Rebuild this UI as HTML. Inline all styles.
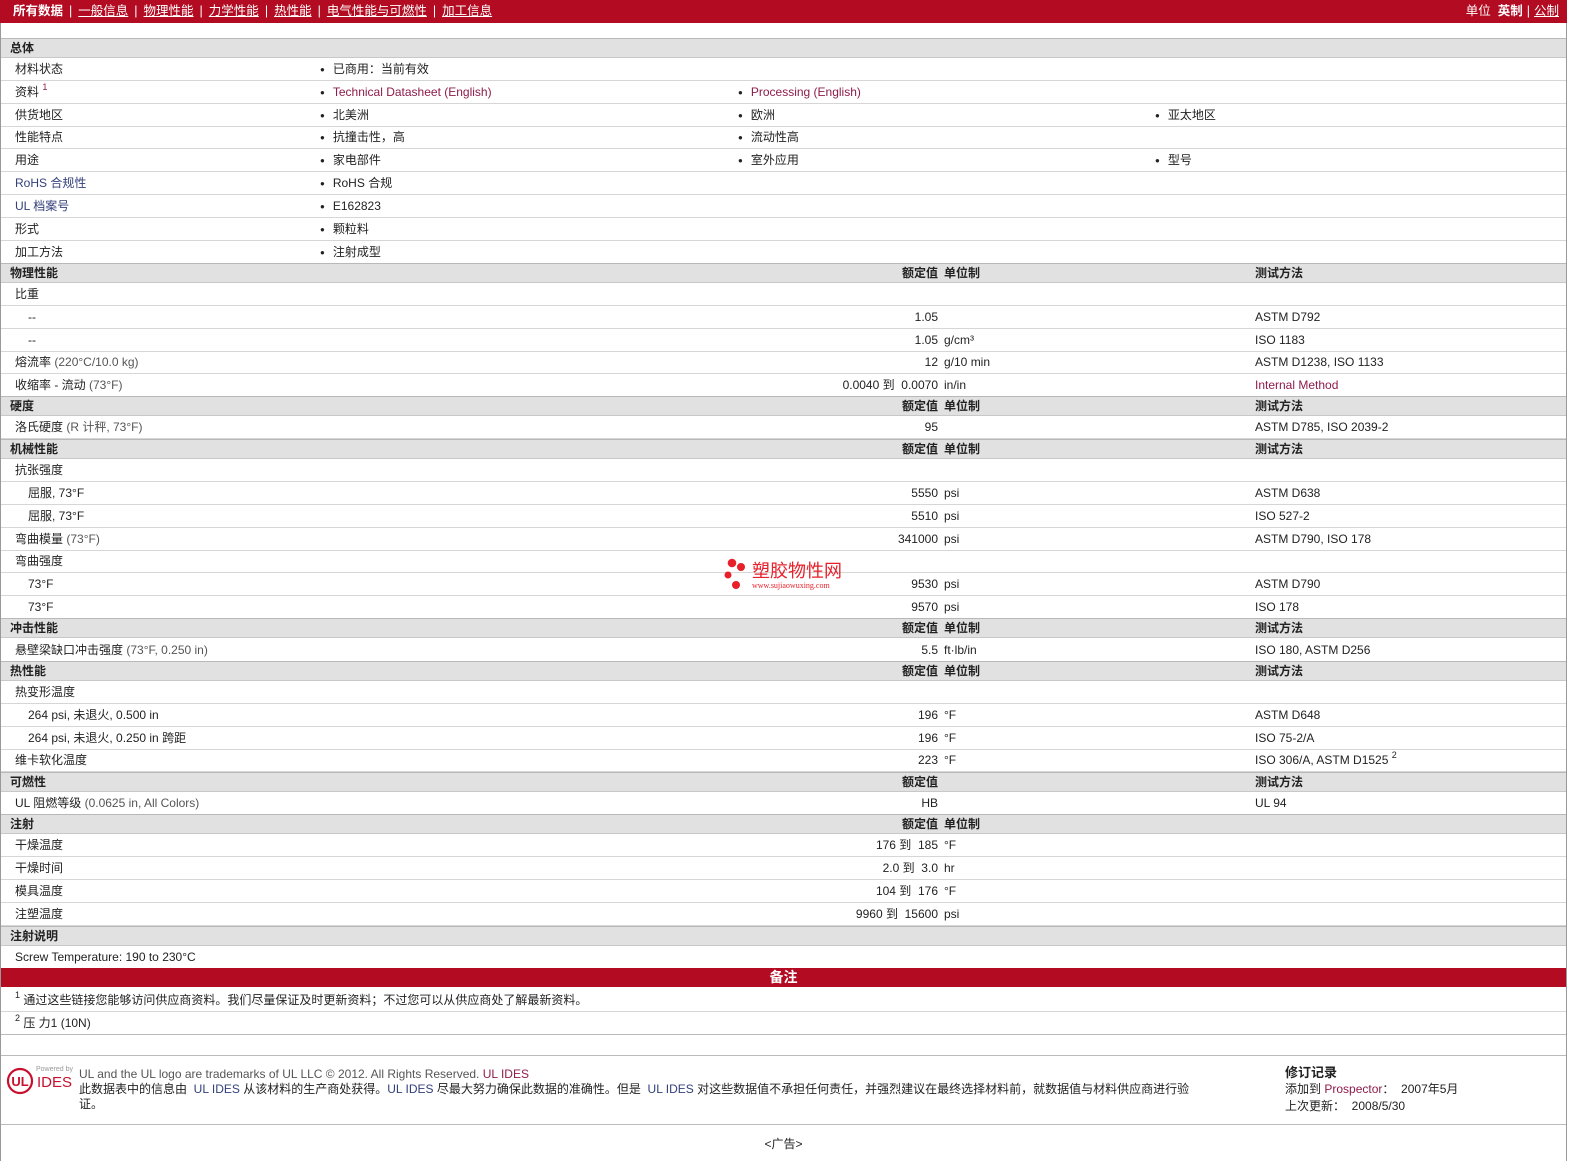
<!DOCTYPE html>
<html><head><meta charset="utf-8">
<style>
*{margin:0;padding:0;box-sizing:border-box}
body{width:1583px;height:1161px;background:#fff;font-family:"Liberation Sans","Noto Sans CJK SC",sans-serif;font-size:12px;color:#222;position:relative;overflow:hidden}
.frame{position:absolute;left:0;top:0;width:1567px;height:1161px;border-left:1px solid #999;border-right:1px solid #999}
.top{position:absolute;left:0;top:0;width:1567px;height:23px;background:#b20b22;color:#fff;line-height:23px;font-size:12.5px}
.top a{color:#fff;text-decoration:underline}
.top .sep{margin:0 6px}
.r{position:absolute;left:1px;width:1565px;height:23px;line-height:23px;border-bottom:1px solid #d6d6d6;white-space:nowrap}
.h{position:absolute;left:1px;width:1565px;height:20px;line-height:19px;background:#e1e1e1;border-top:1px solid #b8b8b8;border-bottom:1px solid #c8c8c8;font-weight:bold;white-space:nowrap}
.r>span,.h>span{position:absolute;top:0}
.l{left:14px}.s{left:27px}.h .t{left:9px}
.v{right:628px;text-align:right}
.u{left:943px}.m{left:1254px}
.hv{right:628px}
.b1{left:319px}.b2{left:737px}.b3{left:1154px}
.dot{font-size:8px;margin-right:8px;position:relative;top:-1px}
.lk{color:#8e1b4b}
.bl{color:#33407a}
.g{color:#555}
sup{font-size:9px;vertical-align:top;position:relative;top:-5px}
</style></head><body>
<div class="frame"></div>
<div class="top">
<span style="position:absolute;left:13px"><b>所有数据</b><span class="sep">|</span><a>一般信息</a><span class="sep">|</span><a>物理性能</a><span class="sep">|</span><a>力学性能</a><span class="sep">|</span><a>热性能</a><span class="sep">|</span><a>电气性能与可燃性</a><span class="sep">|</span><a>加工信息</a></span>
<span style="position:absolute;right:8px">单位 &nbsp;<b>英制</b><span class="sep" style="margin:0 4px">|</span><a>公制</a></span>
</div>

<div class="h" style="top:38px"><span class="t">总体</span></div>
<div class="r" style="top:58px"><span class="l">材料状态</span><span class="b1"><span class="dot">●</span>已商用：当前有效</span></div>
<div class="r" style="top:81px"><span class="l">资料 <sup class="lk">1</sup></span><span class="b1"><span class="dot">●</span><span class="lk">Technical Datasheet (English)</span></span><span class="b2"><span class="dot">●</span><span class="lk">Processing (English)</span></span></div>
<div class="r" style="top:104px"><span class="l">供货地区</span><span class="b1"><span class="dot">●</span>北美洲</span><span class="b2"><span class="dot">●</span>欧洲</span><span class="b3"><span class="dot">●</span>亚太地区</span></div>
<div class="r" style="top:126px"><span class="l">性能特点</span><span class="b1"><span class="dot">●</span>抗撞击性，高</span><span class="b2"><span class="dot">●</span>流动性高</span></div>
<div class="r" style="top:149px"><span class="l">用途</span><span class="b1"><span class="dot">●</span>家电部件</span><span class="b2"><span class="dot">●</span>室外应用</span><span class="b3"><span class="dot">●</span>型号</span></div>
<div class="r" style="top:172px"><span class="l bl">RoHS 合规性</span><span class="b1"><span class="dot">●</span>RoHS 合规</span></div>
<div class="r" style="top:195px"><span class="l bl">UL 档案号</span><span class="b1"><span class="dot">●</span>E162823</span></div>
<div class="r" style="top:218px"><span class="l">形式</span><span class="b1"><span class="dot">●</span>颗粒料</span></div>
<div class="r" style="top:241px"><span class="l">加工方法</span><span class="b1"><span class="dot">●</span>注射成型</span></div>

<div class="h" style="top:263px"><span class="t">物理性能</span><span class="hv">额定值</span><span class="u">单位制</span><span class="m">测试方法</span></div>
<div class="r" style="top:283px"><span class="l">比重</span></div>
<div class="r" style="top:306px"><span class="s">--</span><span class="v">1.05</span><span class="m">ASTM D792</span></div>
<div class="r" style="top:329px"><span class="s">--</span><span class="v">1.05</span><span class="u">g/cm³</span><span class="m">ISO 1183</span></div>
<div class="r" style="top:351px"><span class="l">熔流率 <span class="g">(220°C/10.0 kg)</span></span><span class="v">12</span><span class="u">g/10 min</span><span class="m">ASTM D1238, ISO 1133</span></div>
<div class="r" style="top:374px"><span class="l">收缩率 - 流动 <span class="g">(73°F)</span></span><span class="v">0.0040 到 &nbsp;0.0070</span><span class="u">in/in</span><span class="m lk">Internal Method</span></div>

<div class="h" style="top:396px"><span class="t">硬度</span><span class="hv">额定值</span><span class="u">单位制</span><span class="m">测试方法</span></div>
<div class="r" style="top:416px"><span class="l">洛氏硬度 <span class="g">(R 计秤, 73°F)</span></span><span class="v">95</span><span class="m">ASTM D785, ISO 2039-2</span></div>

<div class="h" style="top:439px"><span class="t">机械性能</span><span class="hv">额定值</span><span class="u">单位制</span><span class="m">测试方法</span></div>
<div class="r" style="top:459px"><span class="l">抗张强度</span></div>
<div class="r" style="top:482px"><span class="s">屈服, 73°F</span><span class="v">5550</span><span class="u">psi</span><span class="m">ASTM D638</span></div>
<div class="r" style="top:505px"><span class="s">屈服, 73°F</span><span class="v">5510</span><span class="u">psi</span><span class="m">ISO 527-2</span></div>
<div class="r" style="top:528px"><span class="l">弯曲模量 <span class="g">(73°F)</span></span><span class="v">341000</span><span class="u">psi</span><span class="m">ASTM D790, ISO 178</span></div>
<div class="r" style="top:550px"><span class="l">弯曲强度</span></div>
<div class="r" style="top:573px"><span class="s">73°F</span><span class="v">9530</span><span class="u">psi</span><span class="m">ASTM D790</span></div>
<div class="r" style="top:596px"><span class="s">73°F</span><span class="v">9570</span><span class="u">psi</span><span class="m">ISO 178</span></div>

<div class="h" style="top:618px"><span class="t">冲击性能</span><span class="hv">额定值</span><span class="u">单位制</span><span class="m">测试方法</span></div>
<div class="r" style="top:639px"><span class="l">悬壁梁缺口冲击强度 <span class="g">(73°F, 0.250 in)</span></span><span class="v">5.5</span><span class="u">ft·lb/in</span><span class="m">ISO 180, ASTM D256</span></div>

<div class="h" style="top:661px"><span class="t">热性能</span><span class="hv">额定值</span><span class="u">单位制</span><span class="m">测试方法</span></div>
<div class="r" style="top:681px"><span class="l">热变形温度</span></div>
<div class="r" style="top:704px"><span class="s">264 psi, 未退火, 0.500 in</span><span class="v">196</span><span class="u">°F</span><span class="m">ASTM D648</span></div>
<div class="r" style="top:727px"><span class="s">264 psi, 未退火, 0.250 in 跨距</span><span class="v">196</span><span class="u">°F</span><span class="m">ISO 75-2/A</span></div>
<div class="r" style="top:749px"><span class="l">维卡软化温度</span><span class="v">223</span><span class="u">°F</span><span class="m">ISO 306/A, ASTM D1525 <sup>2</sup></span></div>

<div class="h" style="top:772px"><span class="t">可燃性</span><span class="hv">额定值</span><span class="m">测试方法</span></div>
<div class="r" style="top:792px"><span class="l">UL 阻燃等级 <span class="g">(0.0625 in, All Colors)</span></span><span class="v">HB</span><span class="m">UL 94</span></div>

<div class="h" style="top:814px"><span class="t">注射</span><span class="hv">额定值</span><span class="u">单位制</span></div>
<div class="r" style="top:834px"><span class="l">干燥温度</span><span class="v">176 到 &nbsp;185</span><span class="u">°F</span></div>
<div class="r" style="top:857px"><span class="l">干燥时间</span><span class="v">2.0 到 &nbsp;3.0</span><span class="u">hr</span></div>
<div class="r" style="top:880px"><span class="l">模具温度</span><span class="v">104 到 &nbsp;176</span><span class="u">°F</span></div>
<div class="r" style="top:903px"><span class="l">注塑温度</span><span class="v">9960 到 &nbsp;15600</span><span class="u">psi</span></div>

<div class="h" style="top:926px"><span class="t">注射说明</span></div>
<div class="r" style="top:946px;border-bottom:none"><span class="l">Screw Temperature: 190 to 230°C</span></div>

<div style="position:absolute;left:1px;top:968px;width:1565px;height:19px;background:#b20b22;color:#fff;text-align:center;font-weight:bold;font-size:14px;line-height:19px">备注</div>
<div class="r" style="top:989px"><span class="l"><sup>1</sup> 通过这些链接您能够访问供应商资料。我们尽量保证及时更新资料；不过您可以从供应商处了解最新资料。</span></div>
<div class="r" style="top:1012px;border-bottom:1px solid #bbb"><span class="l"><sup>2</sup> 压 力1 (10N)</span></div>

<div style="position:absolute;left:1px;top:1055px;width:1565px;height:70px;border-top:1px solid #bbb;border-bottom:1px solid #bbb"></div>
<svg style="position:absolute;left:6px;top:1067px" width="28" height="28" viewBox="0 0 28 28"><circle cx="14" cy="14" r="12" fill="none" stroke="#c8102e" stroke-width="2.2"/><text x="14" y="19" text-anchor="middle" font-family="Liberation Sans" font-weight="bold" font-size="13" fill="#c8102e">UL</text></svg>
<div style="position:absolute;left:36px;top:1066px;font-size:7px;color:#999">Powered by</div>
<div style="position:absolute;left:37px;top:1074px;font-size:15px;color:#c8102e">IDES</div>
<div style="position:absolute;left:79px;top:1067px;line-height:15px;font-size:12px;width:1200px">
<div class="g">UL and the UL logo are trademarks of UL LLC © 2012. All Rights Reserved. <span class="lk">UL IDES</span></div>
<div>此数据表中的信息由 &nbsp;<span class="bl">UL IDES</span> 从该材料的生产商处获得。<span class="bl">UL IDES</span> 尽最大努力确保此数据的准确性。但是 &nbsp;<span class="bl">UL IDES</span> 对这些数据值不承担任何责任，并强烈建议在最终选择材料前，就数据值与材料供应商进行验<br>证。</div>
</div>
<div style="position:absolute;left:1285px;top:1064px;line-height:17px;font-size:12px">
<div style="font-weight:bold;font-size:13px">修订记录</div>
<div>添加到 <span class="lk">Prospector</span>： &nbsp;2007年5月</div>
<div>上次更新： &nbsp;2008/5/30</div>
</div>
<div style="position:absolute;left:0;width:1567px;top:1135px;text-align:center;font-size:12px">&lt;广告&gt;</div>

<svg style="position:absolute;left:722px;top:557px" width="24" height="34" viewBox="0 0 24 34"><circle cx="10" cy="6" r="4.3" fill="#e8202a"/><circle cx="19" cy="10" r="4" fill="#e8202a"/><circle cx="6" cy="18" r="3.5" fill="#e8202a"/><circle cx="14" cy="28" r="4" fill="#e8202a"/></svg>
<div style="position:absolute;left:752px;top:561px;font-size:18px;color:#e8202a;line-height:20px">塑胶物性网</div>
<div style="position:absolute;left:752px;top:581px;font-size:8px;color:#e8202a;font-family:'Liberation Serif',serif">www.sujiaowuxing.com</div>
</body></html>
